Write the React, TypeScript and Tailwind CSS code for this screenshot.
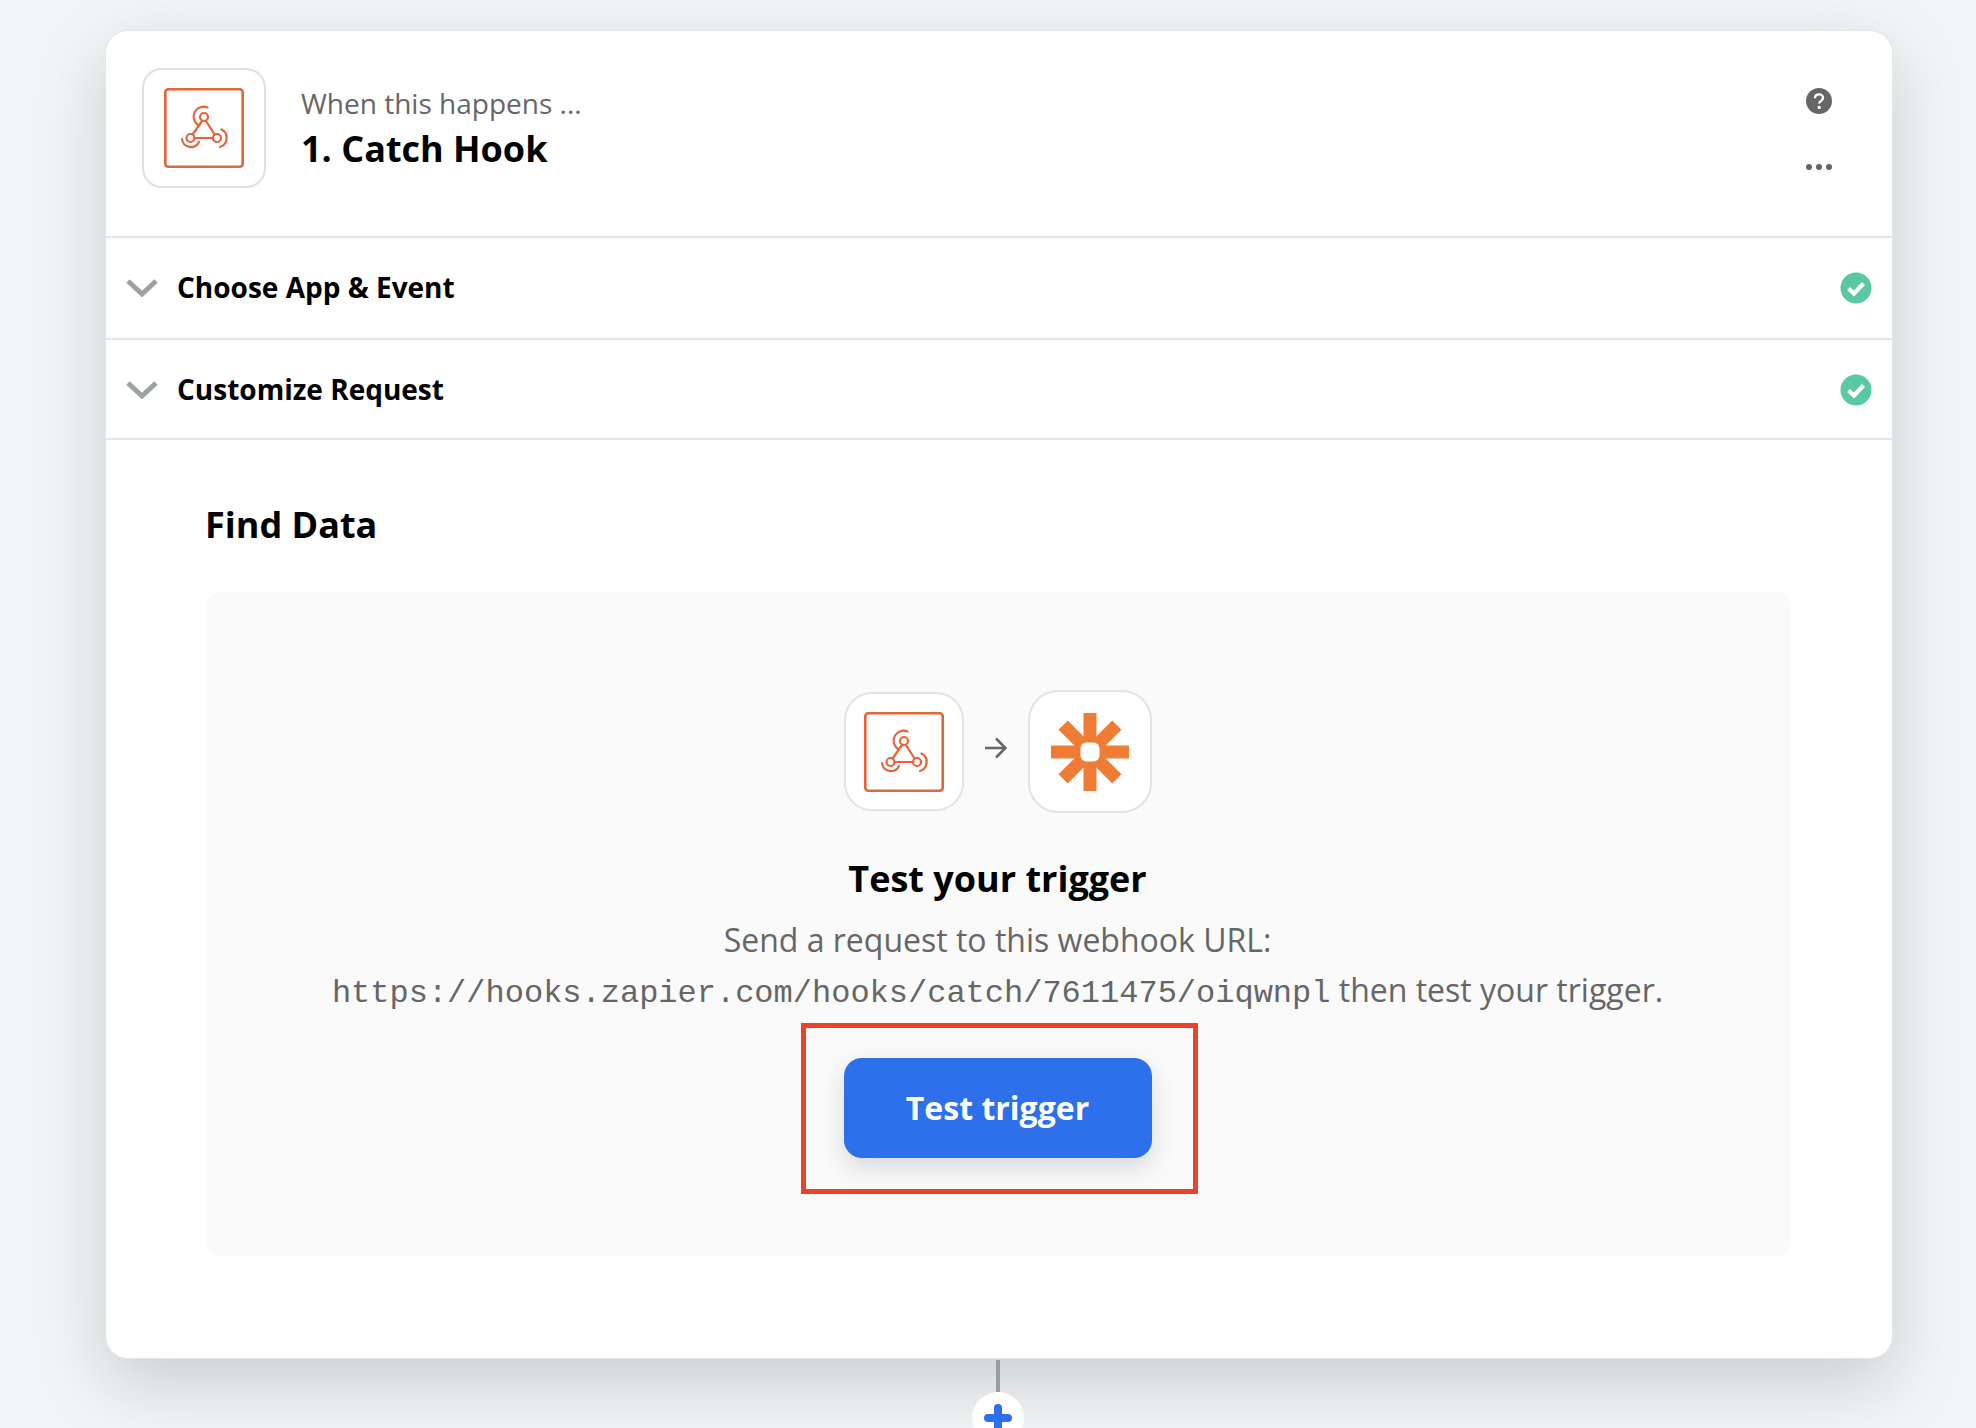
const sans = "font-['Open_Sans',sans-serif]";

function WebhookIcon({ className }: { className: string }) {
  return (
    <svg viewBox="0 0 80 80" fill="none" stroke="#e4633a" strokeWidth="2.2" strokeLinecap="round" className={className}>
      <rect x="1.3" y="1.3" width="77.4" height="77.4" rx="3" strokeWidth="2.6" />
      <circle cx="40" cy="29" r="4" />
      <circle cx="26.5" cy="50" r="4" />
      <circle cx="53" cy="50" r="4" />
      <path d="M38 33 29 46M42 33 50.5 46.5M30.5 50H49" />
      <path d="M43.5 19.5A10 10 0 0 0 34 37" />
      <path d="M18 51A9 9 0 0 0 35 54" />
      <path d="M57.5 41.5A9.5 9.5 0 0 1 56 59" />
    </svg>
  );
}

function ZapierIcon() {
  return (
    <svg viewBox="0 0 78 78" className="w-[78px] h-[78px]" fill="#ee7c35">
      <rect x="32.5" y="0" width="13" height="78" />
      <rect x="0" y="32.5" width="78" height="13" />
      <rect x="32.5" y="1" width="13" height="76" transform="rotate(45 39 39)" />
      <rect x="32.5" y="1" width="13" height="76" transform="rotate(-45 39 39)" />
      <rect x="29.5" y="29.5" width="19" height="19" rx="6" fill="#fff" />
    </svg>
  );
}

function Chevron() {
  return (
    <svg viewBox="0 0 32 18" fill="none" stroke="#9ca1a3" strokeWidth="5" className="w-8 h-[18px] shrink-0">
      <path d="M2 2 16 15 30 2" />
    </svg>
  );
}

function CheckBadge() {
  return (
    <svg viewBox="0 0 32 32" className="w-8 h-8 shrink-0">
      <circle cx="16" cy="16" r="15.5" fill="#5bc8a4" />
      <path d="M8.5 16.5 14 21.5 23.5 11.5" fill="none" stroke="#fff" strokeWidth="4.2" />
    </svg>
  );
}

function SectionRow({ title, height }: { title: string; height: string }) {
  return (
    <div className={`flex items-center border-b-2 border-[#e4e5e6] pl-[20px] pr-[20px] ${height}`}>
      <Chevron />
      <span className="ml-[19px] mt-[-2px] text-[28px] font-bold text-black leading-none">{title}</span>
      <div className="ml-auto">
        <CheckBadge />
      </div>
    </div>
  );
}

export default function App() {
  return (
    <div className={`h-screen overflow-hidden bg-[#f3f5f6] pt-[31px] pl-[106px] ${sans}`}>
      <div className="w-[1786px] h-[1327px] rounded-[22px] bg-white shadow-[0_0_0_1px_#e4e6e7,0_24px_70px_rgba(90,100,105,0.28)]">
        <div className="h-[207px] flex items-start border-b-2 border-[#e4e5e6] pl-[36px] pr-[60px]">
          <div className="mt-[37px] w-[124px] h-[120px] rounded-[20px] border-2 border-[#dedfe0] flex items-center justify-center shrink-0">
            <WebhookIcon className="w-20 h-20" />
          </div>
          <div className="ml-[35px] mt-[52px]">
            <div className="text-[28px] leading-[40px] text-[#666666]">When this happens ...</div>
            <div className="mt-[2px] text-[36px] leading-[48px] font-bold text-black">1. Catch Hook</div>
          </div>
          <div className="ml-auto mt-[57px] flex flex-col items-center gap-[50px]">
            <svg viewBox="0 0 26 26" className="w-[26px] h-[26px]">
              <circle cx="13" cy="13" r="13" fill="#666666" />
              <path d="M9 10.2C9 7.8 10.8 6.4 13 6.4S17 7.8 17 9.9C17 12.6 13.2 12.8 13.2 15.6" fill="none" stroke="#fff" strokeWidth="2.4" />
              <circle cx="13.2" cy="19.4" r="1.7" fill="#fff" />
            </svg>
            <div className="flex gap-1">
              <span className="w-[6px] h-[6px] rounded-full bg-[#666666]" />
              <span className="w-[6px] h-[6px] rounded-full bg-[#666666]" />
              <span className="w-[6px] h-[6px] rounded-full bg-[#666666]" />
            </div>
          </div>
        </div>

        <SectionRow title="Choose App & Event" height="h-[102px] pb-[1px]" />
        <SectionRow title="Customize Request" height="h-[100px] pt-[1px]" />

        <div className="pt-[60px] pl-[101px]">
          <h2 className="ml-[-2px] text-[36px] leading-[50px] font-bold text-black">Find Data</h2>
          <div className="mt-[42px] w-[1584px] h-[664px] rounded-[14px] bg-[#fafafa] pt-[98px] pr-[3px] flex flex-col items-center">
            <div className="flex items-center ml-[1px]">
              <div className="w-[120px] h-[119px] rounded-[28px] border-2 border-[#e2e3e3] bg-white flex items-center justify-center">
                <WebhookIcon className="w-20 h-20" />
              </div>
              <svg viewBox="0 0 22 22" fill="none" stroke="#666666" strokeWidth="2.6" className="mx-[21px] w-[22px] h-[22px] mt-[-8px]">
                <path d="M0 11H20M11 1.5 20.5 11 11 20.5" />
              </svg>
              <div className="w-[124px] h-[123px] rounded-[30px] border-2 border-[#e2e3e3] bg-white flex items-center justify-center">
                <ZapierIcon />
              </div>
            </div>
            <h3 className="mt-[42px] text-[36px] leading-[48px] font-bold text-black">Test your trigger</h3>
            <p className="mt-[12px] text-[32px] leading-[50px] text-[#666666]">Send a request to this webhook URL:</p>
            <p className="text-[32px] leading-[50px] text-[#666666] whitespace-nowrap">
              <span className="font-['Liberation_Mono',monospace] text-[32px]">https://hooks.zapier.com/hooks/catch/7611475/oiqwnpl</span>{" "}
              then test your trigger.
            </p>
            <div className="mt-[4px] ml-[3px] w-[397px] h-[171px] border-[5px] border-[#e8432c] flex items-center justify-center pr-[3px] pb-[2px]">
              <button className="w-[308px] h-[100px] rounded-[18px] bg-[#2e6fea] text-white text-[32px] font-bold shadow-[0_10px_24px_rgba(60,70,80,0.18)]">
                Test trigger
              </button>
            </div>
          </div>
        </div>
      </div>

      <div className="w-[1786px] flex flex-col items-center pr-[2px]">
        <div className="mt-[2px] w-1 h-8 bg-[#9a9d9f]" />
        <div className="w-[52px] h-[52px] rounded-full bg-white flex items-center justify-center shrink-0">
          <svg viewBox="0 0 28 28" fill="none" stroke="#2e6fea" strokeWidth="8" strokeLinecap="round" className="w-7 h-7">
            <path d="M4 14H24M14 4V24" />
          </svg>
        </div>
      </div>
    </div>
  );
}
